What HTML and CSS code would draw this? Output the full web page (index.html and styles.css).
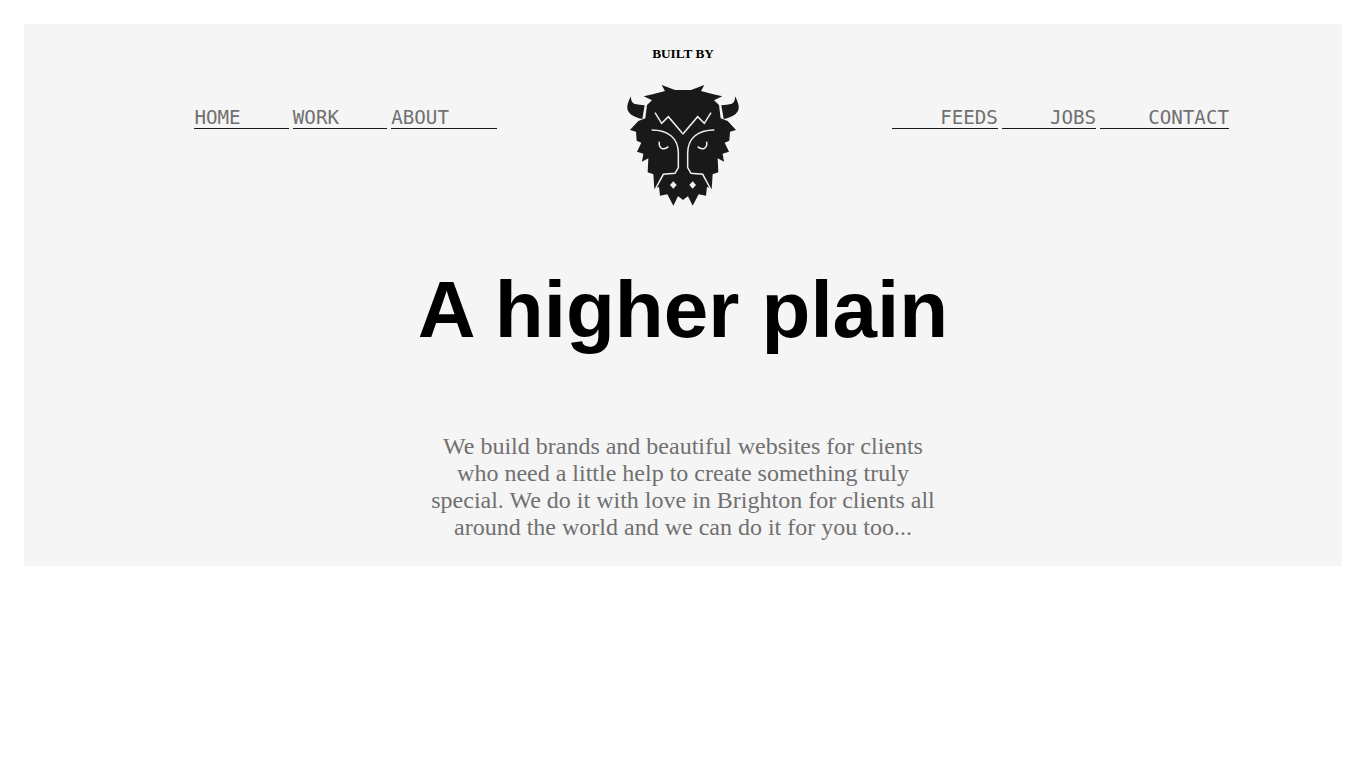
FILE: index.html
```
<!DOCTYPE html>
<html lang="en">
<head>
<meta charset="utf-8">
<title>A higher plain</title>
<link rel="stylesheet" href="styles.css">
</head>
<body>
<section class="hero">
  <p class="built">BUILT BY</p>
  <header class="head">
    <nav class="nav nav-left"><a href="#">HOME</a> <a href="#">WORK</a> <a href="#">ABOUT</a></nav>
    <svg class="logo" viewBox="0 0 438 420" width="146" height="140" aria-label="Bison logo">
      <defs>
        <g id="half">
          <path class="ink" d="M220 45L195 45L155 30L165 48L128 58L101 64L126 76L111 90L106 130L85 138L60 165L78 170L80 197L94 203L81 230L100 236L96 260L115 250L113 292L130 298L133 342L147 335L150 362L172 358L190 392L204 364L220 375Z"/>
          <path class="ink" d="M63 64C62 75 66 83 72 86Q88 90 104 91L97 132Q75 128 62 118Q48 105 53 88Q56 75 63 64Z"/>
          <path class="line" d="M135 113L155 145L175 125L220 178"/>
          <path class="line" d="M125 165C175 165 205 190 205 235L205 278L195 295L160 298L136 342"/>
          <path class="line" d="M148 200C145 220 160 228 175 215"/>
          <path class="dot" d="M190 319L200 330L190 341L180 330Z"/>
        </g>
      </defs>
      <use href="#half"/>
      <use href="#half" transform="matrix(-1 0 0 1 438 0)"/>
    </svg>
    <nav class="nav nav-right"><a href="#">FEEDS</a> <a href="#">JOBS</a> <a href="#">CONTACT</a></nav>
  </header>
  <h1 class="title">A higher plain</h1>
  <p class="intro">We build brands and beautiful websites for clients who need a little help to create something truly special. We do it with love in Brighton for clients all around the world and we can do it for you too...</p>
</section>
</body>
</html>
```
FILE: styles.css
```
* { box-sizing: border-box; }
html, body { margin: 0; background: #fff; }
body { padding: 24px; font-family: "Liberation Serif", serif; font-size: 16px; min-height: 768px; }
.hero { background: #f5f5f5; height: 542px; padding-top: 22px; display: flex; flex-direction: column; align-items: center; }
.built { margin: 0; font-size: 13.3px; line-height: 16px; font-weight: 700; color: #000; }
.head { width: 100%; margin-top: 13px; display: grid; grid-template-columns: 1fr 146px 1fr; align-items: start; }
.nav { padding-top: 32px; white-space: pre-wrap; }
.nav-left { padding-left: 170.4px; text-align: left; }
.nav-right { padding-right: 113px; text-align: right; }
.nav a { display: inline-block; font-family: "DejaVu Sans Mono", monospace; font-size: 19.2px; line-height: 21px; color: #707070; text-decoration: none; border-bottom: 1px solid #1a1a1a; }
.nav-left a { padding-right: 48.2px; }
.nav-right a { padding-left: 48px; }
.logo { display: block; }
.ink { fill: #191919; }
.line { fill: none; stroke: #f0f0f0; stroke-width: 4.5; }
.dot { fill: #f0f0f0; }
.title { margin: 49px 0 0; font-family: "Liberation Sans", sans-serif; font-size: 80px; line-height: 92px; font-weight: 700; color: #000; }
.intro { margin: 77px 0 0; width: 520px; font-size: 24px; line-height: 27px; color: #707070; text-align: center; }
```
